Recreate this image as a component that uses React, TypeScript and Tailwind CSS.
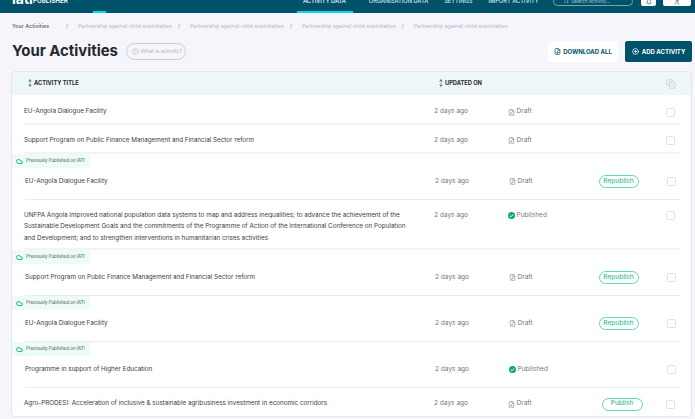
import {CircleHelp, CirclePlus, Cloud, CopyCheck, FileDown, FilePen, ArrowDown, ArrowUp, Bell, Search, User} from "lucide-react"

type Row = {
    title: string[]
    rowClass: string
    previous?: boolean
    status: "Draft" | "Published"
    action?: "Republish" | "Publish"
    last?: boolean
}

const rows: Row[] = [
    {title: ["EU-Angola Dialogue Facility"], rowClass: "h-[30px] pt-[6px]", status: "Draft"},
    {title: ["Support Program on Public Finance Management and Financial Sector reform"], rowClass: "h-[29px] pt-[4px]", status: "Draft"},
    {title: ["EU-Angola Dialogue Facility"], rowClass: "h-[46px] pt-[10px]", previous: true, status: "Draft", action: "Republish"},
    {
        title: [
            "UNFPA Angola Improved national population data systems to map and address inequalities; to advance the achievement of the",
            "Sustainable Development Goals and the commitments of the Programme of Action of the International Conference on Population",
            "and Development; and to strengthen interventions in humanitarian crises activities",
        ],
        rowClass: "h-[50px] pt-[10px]",
        status: "Published",
    },
    {title: ["Support Program on Public Finance Management and Financial Sector reform"], rowClass: "h-[46px] pt-[10px]", previous: true, status: "Draft", action: "Republish"},
    {title: ["EU-Angola Dialogue Facility"], rowClass: "h-[46px] pt-[10px]", previous: true, status: "Draft", action: "Republish"},
    {title: ["Programme in support of Higher Education"], rowClass: "h-[46px] pt-[10px]", previous: true, status: "Published"},
    {title: ["Agro-PRODESI: Acceleration of inclusive & sustainable agribusiness investment in economic corridors"], rowClass: "h-[28px] pt-[4px]", status: "Draft", action: "Publish", last: true},
]

const crumbs = [
    "Partnership against child exploitation",
    "Partnership against child exploitation",
    "Partnership against child exploitation",
    "Partnership against child exploitation",
]

const SortIcon = () => (
    <span className="flex w-[5px] flex-col items-center text-[#00526a]">
        <ArrowUp size={4} strokeWidth={4} />
        <ArrowDown size={4} strokeWidth={4} />
    </span>
)

const PublishedIcon = () => (
    <svg width="7" height="7" viewBox="0 0 14 14">
        <circle cx="7" cy="7" r="7" fill="#06a77d" />
        <path d="M3.6 7.2 6 9.5l4.4-4.6" fill="none" stroke="#fff" strokeWidth="2" />
    </svg>
)

const ActivityRow = ({row}: {row: Row}) => (
    <div className={`relative ${row.rowClass} ${row.previous ? "pl-[13px]" : "pl-[12px]"} pr-[11px]`}>
        {row.previous && (
            <div className="absolute top-0 left-0 flex h-[14px] w-[78px] items-center gap-[3px] rounded-br-[3px] bg-[#edfbf6] pl-[4px] text-[4.4px] text-[#46575e]">
                <Cloud size={7} strokeWidth={3} className="text-[#0aa884]" />
                Previously Published on IATI
            </div>
        )}
        <div
            className={`flex h-full text-[6.55px] leading-[11.3px] ${row.title.length > 1 ? "items-start" : "items-center"} ${
                row.last ? "" : row.previous ? "border-b border-[#e9ebee]" : "border-b-2 border-[#f3f4f6]"
            }`}
        >
            <div className="w-[410px] text-[6.3px] text-[#363e43]">
                {row.title.map((line) => (
                    <div key={line} className="whitespace-nowrap">{line}</div>
                ))}
            </div>
            <div className="w-[73.5px] text-[#6f7a80]">2 days ago</div>
            <div className="flex h-[11px] w-[90px] items-center gap-[2px] text-[#6f7a80]">
                {row.status === "Draft" ? <FilePen size={7} strokeWidth={2} /> : <PublishedIcon />}
                {row.status}
            </div>
            <div className="w-[68px]">
                {row.action === "Republish" && (
                    <span className="flex h-[13px] w-[40px] items-center justify-center rounded-full border border-[#5fd6b6] text-[#0fb389]">
                        Republish
                    </span>
                )}
                {row.action === "Publish" && (
                    <span className="ml-[4px] flex h-[13px] w-[41px] items-center justify-center rounded-full border border-[#5fd6b6] text-[#0fb389]">
                        Publish
                    </span>
                )}
            </div>
            <span className={`h-[9px] w-[9px] rounded-[1.5px] border border-[#dfe3e6] bg-white ${row.title.length > 1 ? "mt-[1px]" : ""}`} />
        </div>
    </div>
)

const App = () => {
    return (
        <div className="h-[419px] w-[695px] overflow-hidden bg-[#f6f5fc] font-['Inter',sans-serif]">
            <header className="relative h-[13px] overflow-hidden bg-[#00526a] text-white">
                <div className="mt-[-10px] flex h-[23px] items-center pr-[4px] pl-[12px] whitespace-nowrap">
                    <span className="mt-[-5px] w-[17px] shrink-0 text-[14px] leading-none font-bold">iati</span>
                    <span className="ml-[4px] w-[39px] shrink-0 text-[6.3px] font-semibold">PUBLISHER</span>
                    <nav className="ml-[231px] flex shrink-0 text-[5.7px] font-medium text-[#d7e6ea]">
                        <span className="mr-[23px] text-white">ACTIVITY DATA</span>
                        <span className="mr-[16px]">ORGANISATION DATA</span>
                        <span className="mr-[16px]">SETTINGS</span>
                        <span>IMPORT ACTIVITY</span>
                    </nav>
                    <div className="ml-auto flex h-[9px] w-[80px] shrink-0 items-center gap-[2px] rounded-full border border-[#7ba3af] pl-[10px] text-[5px] text-[#a9c4cc]">
                        <Search size={5} />
                        Search activity...
                    </div>
                    <div className="ml-[8px] flex h-[9px] w-[15px] shrink-0 items-center justify-center rounded-[2px] bg-white text-[#00526a]">
                        <Bell size={6} />
                    </div>
                    <div className="ml-[7px] flex h-[9px] w-[28px] shrink-0 items-center justify-center rounded-[2px] bg-white text-[#00526a]">
                        <User size={6} />
                    </div>
                </div>
                <span className="absolute bottom-0 left-[93px] h-[2px] w-[13px] bg-[#00dfe8]" />
                <span className="absolute bottom-0 left-[297px] h-[2px] w-[56px] bg-[#00dfe8]" />
            </header>

            <div className="flex h-[26px] items-center pt-[1px] pl-[12px] text-[5.4px] whitespace-nowrap text-[#b4bbc4]">
                <span className="mr-[17px] font-medium text-[#5b6469]">Your Activities</span>
                {crumbs.map((crumb, index) => (
                    <span key={index} className="flex gap-[10px] pr-[6px]">
                        <span className="text-[#7b858c]">/</span>
                        {crumb}
                    </span>
                ))}
            </div>

            <div className="mt-[2px] flex h-[21px] items-center pr-[3px] pl-[12px]">
                <h1 className="text-[14.9px] font-bold text-[#23292d]">Your Activities</h1>
                <span className="ml-[8px] flex h-[17px] w-[60px] items-center gap-[1.5px] rounded-full border border-[#c8ced3] pl-[5px] text-[5.4px] text-[#b2b9c0]">
                    <CircleHelp size={7} />
                    What is activity?
                </span>
                <button className="ml-auto flex h-[21px] w-[70px] items-center justify-center gap-[2px] rounded-[2px] bg-white text-[6px] font-bold text-[#00526a]">
                    <FileDown size={7} strokeWidth={2.5} />
                    DOWNLOAD ALL
                </button>
                <button className="ml-[7px] flex h-[21px] w-[67px] items-center justify-center gap-[3px] rounded-[2px] bg-[#00526a] text-[6px] font-bold text-white">
                    <CirclePlus size={7} strokeWidth={2.5} />
                    ADD ACTIVITY
                </button>
            </div>

            <div className="mt-[9px] mr-[3px] ml-[11px] overflow-hidden rounded-[4px] border border-[#e2e7ea] bg-white">
                <div className="flex h-[23px] items-center bg-[#eff6f8] pr-[15px] pl-[15px] text-[5.7px] font-bold text-[#23292d]">
                    <div className="flex w-[411px] items-center gap-[2px]">
                        <SortIcon />
                        ACTIVITY TITLE
                    </div>
                    <div className="flex items-center gap-[2px]">
                        <SortIcon />
                        UPDATED ON
                    </div>
                    <CopyCheck size={10} strokeWidth={1.5} className="ml-auto text-[#b9c2c7]" />
                </div>
                {rows.map((row, index) => (
                    <ActivityRow key={index} row={row} />
                ))}
            </div>
        </div>
    )
}

export default App
